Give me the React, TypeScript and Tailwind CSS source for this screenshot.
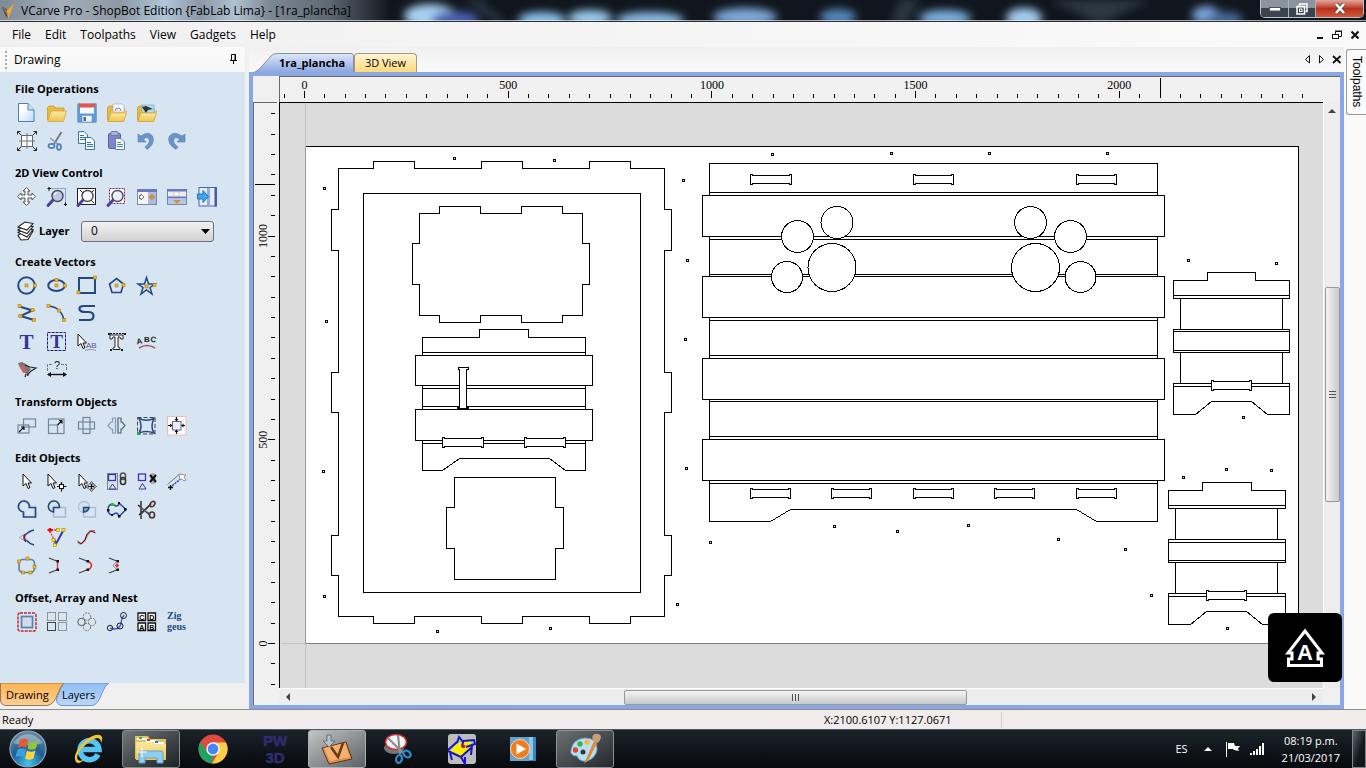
import type { ReactNode } from "react";

const menuItems = ["File", "Edit", "Toolpaths", "View", "Gadgets", "Help"];

const navy = "#24487f";
const gold = "#f2b824";

function Node({ x, y, fill = gold }: { x: number; y: number; fill?: string }) {
  return <rect x={x - 1.5} y={y - 1.5} width="3" height="3" fill={fill} stroke="#b07f10" strokeWidth="0.6" />;
}

function Pointer({ x = 0, y = 0 }: { x?: number; y?: number }) {
  return (
    <path
      transform={`translate(${x} ${y})`}
      d="M0 0V12L3 9.5L5 14.5L7 13.6L5 9H8.5Z"
      fill="#fff"
      stroke="#111"
      strokeWidth="1"
    />
  );
}

function Lens({ fill = "#b9c9e6" }: { fill?: string }) {
  return (
    <>
      <path d="M6.500 12.500L1 18.500" stroke="#4b3fa0" strokeWidth="3" strokeLinecap="round" />
      <circle cx="10.500" cy="9" r="5.500" fill={fill} stroke="#4a4a55" strokeWidth="1.400" />
      <path d="M7.500 8A3.500 3.500 0 0 1 10.500 5.500" stroke="#fff" strokeWidth="1.200" fill="none" />
    </>
  );
}

function Folder() {
  return (
    <>
      <path d="M0.500 17V4.500L2 3H7L9 5H17V8" fill="#e9bb45" stroke="#c79a34" strokeWidth="0.800" />
      <path d="M0.800 18.500L4 8H19.500L16.500 18.500Z" fill="url(#folderFill)" stroke="#d4a53a" strokeWidth="0.800" />
    </>
  );
}

const icons: Record<string, ReactNode> = {
  "New file": (
    <>
      <path d="M1.500 0.500H11L17 7V18.500H1.500Z" fill="url(#paperFill)" stroke="#4682b9" />
      <path d="M11 0.500V7H17" fill="#cfe3f7" stroke="#4682b9" />
    </>
  ),
  "Open file": <Folder />,
  "Save file": (
    <>
      <rect x="0.500" y="0.500" width="19" height="19" rx="1" fill="#5b9bd8" stroke="#7fa6cf" />
      <rect x="3" y="0.500" width="14" height="10" fill="#f6f8fb" />
      <rect x="2" y="0.500" width="16" height="4" fill="#e2574c" />
      <rect x="5" y="12.500" width="10" height="6.500" fill="#eef2f7" stroke="#7e95b1" strokeWidth="0.600" />
      <rect x="6.500" y="14" width="2.500" height="4" fill="#3b6fa5" />
    </>
  ),
  "Import vectors": (
    <>
      <Folder />
      <path d="M6 1H15L17 3V9H6Z" fill="#fff" stroke="#9ab" strokeWidth="0.700" />
      <path d="M8 8A3 3 0 0 1 14 8" fill="#dfe8f2" stroke="#889" />
      <path d="M0.800 18.500L4 10H19.500L16.500 18.500Z" fill="url(#folderFill)" stroke="#d4a53a" strokeWidth="0.800" />
    </>
  ),
  "Import bitmap": (
    <>
      <Folder />
      <rect x="5" y="2" width="12" height="8" fill="#a9dff0" stroke="#8ab" strokeWidth="0.700" />
      <path d="M5 4L9 3L16 6L11 7L9 10Z" fill="#343434" />
      <path d="M0.800 18.500L4 10H19.500L16.500 18.500Z" fill="url(#folderFill)" stroke="#d4a53a" strokeWidth="0.800" />
    </>
  ),
  "Job setup": (
    <g fill="none" stroke="#222">
      <rect x="4.500" y="4.500" width="11" height="11" fill="#f8f8f8" stroke="#666" />
      <path d="M10 2V18M2 10H18" stroke="#777" />
      <path d="M0.500 3.500V0.500H3.500M0.500 0.500L4 4M16.500 0.500H19.500V3.500M19.500 0.500L16 4M0.500 16.500V19.500H3.500M0.500 19.500L4 16M16.500 19.500H19.500V16.500M19.500 19.500L16 16" />
    </g>
  ),
  Cut: (
    <g fill="none">
      <path d="M14.500 1L7 13" stroke="#6d7783" strokeWidth="1.800" />
      <path d="M3 7L12 14" stroke="#8d97a3" strokeWidth="1.500" />
      <ellipse cx="4.500" cy="15" rx="3" ry="2.200" stroke="#4a7fbd" strokeWidth="1.700" />
      <ellipse cx="12" cy="16" rx="2" ry="2.800" stroke="#4a7fbd" strokeWidth="1.700" />
    </g>
  ),
  Copy: (
    <g stroke="#3173b8" strokeWidth="1">
      <path d="M1.500 0.500H7L10.500 4V12.500H1.500Z" fill="#fff" />
      <path d="M3 4.500H7M3 6.500H9M3 8.500H9" />
      <path d="M8.500 6.500H14L17.500 10V18.500H8.500Z" fill="#fff" />
      <path d="M10 11.500H14M10 13.500H16M10 15.500H16" />
    </g>
  ),
  Paste: (
    <>
      <rect x="1.500" y="2.500" width="12" height="15" rx="1" fill="#8184c9" stroke="#5c5fa8" />
      <rect x="4" y="0.500" width="7" height="4" rx="1" fill="#aeb3c7" stroke="#72779a" />
      <path d="M8.500 7.500H14L17.500 11V18.500H8.500Z" fill="#fff" stroke="#4a86c4" />
      <path d="M10 11.500H14M10 13.500H16M10 15.500H16" stroke="#4a86c4" />
    </>
  ),
  Undo: <path d="M1 3V11H9L6.500 8.500Q10 5 12 8Q13.500 12 8 16L10 18.500Q18 13 16 6Q12-1 4 5Z" fill="#6a94c8" stroke="#587fb1" strokeWidth="0.600" />,
  Redo: <path d="M18 3V11H10L12.500 8.500Q9 5 7 8Q5.500 12 11 16L9 18.500Q0 13 2 6Q6-1 15 5Z" fill="#6a94c8" stroke="#587fb1" strokeWidth="0.600" />,
  Pan: (
    <path
      d="M9.500 0.500L13 4H11V8H15V6L18.500 9.500L15 13V11H11V15H13L9.500 18.500L6 15H8V11H4V13L0.500 9.500L4 6V8H8V4H6Z"
      fill="#fafafa"
      stroke="#555"
      strokeWidth="1"
    />
  ),
  "Zoom interactive": (
    <>
      <path d="M3 1.500H18.500V17" fill="none" stroke="#8fa5c4" />
      <path d="M0.500 1.500H4M2 0V4M17 17.500H20M18.500 15.500V19" stroke="#111" />
      <Lens />
    </>
  ),
  "Zoom to drawing": (
    <>
      <rect x="0.500" y="1.500" width="18" height="16" fill="#fff" stroke="#222" />
      <path d="M3 3L6 6M17 3L14 6M17 16L14 13" stroke="#222" />
      <Lens fill="#f4f6f8" />
    </>
  ),
  "Zoom to selected": (
    <>
      <rect x="2.500" y="1.500" width="15" height="15" fill="#fff" stroke="#8b1a8b" strokeDasharray="2 1" />
      <Lens fill="#e9eef5" />
    </>
  ),
  "Tile vertical": (
    <>
      <rect x="0.500" y="2.500" width="19" height="15" fill="#f5f5f5" stroke="#7d86a5" />
      <rect x="0" y="2" width="20" height="3" fill="#6c78bd" />
      <rect x="11" y="5" width="8" height="12" fill="#aebbe8" />
      <path d="M2.500 8.500H4V7L7 10L4 13V11.500H2.500Z" fill="#fff" stroke="#555" strokeWidth="0.800" />
      <path d="M11.500 10L15 6.500L18.500 10L15 13.500Z" fill="#c59a3c" />
    </>
  ),
  "Tile horizontal": (
    <>
      <rect x="0.500" y="2.500" width="19" height="15" fill="#ededf0" stroke="#7d86a5" />
      <rect x="0" y="2" width="20" height="2.500" fill="#6c78bd" />
      <rect x="0" y="9.500" width="20" height="2" fill="#6c78bd" />
      <rect x="7" y="5" width="5" height="4" fill="#fff" stroke="#aaa" strokeWidth="0.600" />
      <rect x="1" y="11.500" width="18" height="5.500" fill="#bac5ea" />
      <path d="M6 13H14L10 17Z" fill="#c59a3c" />
    </>
  ),
  "Switch to toolpaths": (
    <>
      <rect x="2" y="0.500" width="17.500" height="18.500" fill="#e4ecfa" stroke="#4a66b5" />
      <rect x="10" y="1" width="3" height="18" fill="#93a9e0" />
      <path d="M18.500 0V19.500" stroke="#4a56a5" strokeWidth="2" />
      <path d="M0.500 7H6V3.500L11.500 9.500L6 15.500V12H0.500Z" fill="#42a4ee" stroke="#1d74c4" />
    </>
  ),
  "Draw circle": (
    <>
      <circle cx="9.500" cy="9.500" r="8.300" fill="none" stroke={navy} strokeWidth="2" />
      <Node x={9.5} y={9.5} />
      <Node x={18} y={9.5} />
    </>
  ),
  "Draw ellipse": (
    <>
      <ellipse cx="9.500" cy="9.500" rx="8.300" ry="5.500" fill="none" stroke={navy} strokeWidth="2" />
      <Node x={9.5} y={4} />
      <Node x={9.5} y={9.5} />
      <Node x={18} y={9.5} />
    </>
  ),
  "Draw rectangle": (
    <>
      <rect x="2" y="2" width="16" height="15" fill="none" stroke={navy} strokeWidth="2" />
      <Node x={18} y={1.5} />
      <Node x={1.5} y={16.5} />
    </>
  ),
  "Draw polygon": (
    <>
      <path d="M9.500 2.500L16.500 8L14 16.500H5L2.500 8Z" fill="none" stroke={navy} strokeWidth="1.600" />
      <Node x={9.5} y={9.5} />
      <Node x={16.5} y={9} />
    </>
  ),
  "Draw star": (
    <>
      <path d="M9.500 1.500L11.500 8H18L13 11.500L15 18L9.500 14L4 18L6 11.500L1 8H7.500Z" fill="none" stroke={navy} strokeWidth="1.500" />
      <Node x={9.5} y={10.5} />
      <Node x={17.5} y={9} />
    </>
  ),
  "Draw line": (
    <>
      <path d="M2.500 2.500L15.500 6.500L3.500 12L17 16" fill="none" stroke={navy} strokeWidth="2" />
      <Node x={2.5} y={2} />
      <Node x={15.5} y={6} />
      <Node x={3.5} y={12} />
      <Node x={17} y={16} />
    </>
  ),
  "Draw arc": (
    <>
      <path d="M1.500 2Q14 3 17 16" fill="none" stroke={navy} strokeWidth="1.500" />
      <Node x={1.5} y={2} />
      <Node x={12} y={6.5} />
      <Node x={17} y={16} />
    </>
  ),
  "Draw curve": <path d="M18 2H7Q2 2 2.500 5Q3 8 8 8H12Q16.500 8.500 16.500 12Q16.500 16 12 16H2" fill="none" stroke={navy} strokeWidth="2.200" />,
  "Draw text": (
    <text x="9.500" y="16.500" textAnchor="middle" fontSize="21" fontWeight="700" fontFamily="Liberation Serif, serif" fill="#35359a">T</text>
  ),
  "Draw auto text": (
    <>
      <rect x="0.500" y="0.500" width="18" height="18" fill="none" stroke="#1b1b8a" strokeDasharray="3 1" />
      <text x="9.500" y="16" textAnchor="middle" fontSize="19" fontWeight="700" fontFamily="Liberation Serif, serif" fill="#35359a">T</text>
    </>
  ),
  "Text selection": (
    <>
      <Pointer x={1} y={2} />
      <text x="9" y="16" fontSize="8" fontFamily="Liberation Sans, sans-serif" fill="#555a80">AB</text>
      <path d="M8 18.500Q14 16 19 18.500" fill="none" stroke="#8b90b5" />
    </>
  ),
  "Convert text": (
    <>
      <path d="M3 3H16V7H14L13 5H11V15L13 16V17.500H6V16L8 15V5H6L5 7H3Z" fill="#fff" stroke="#222" />
      <path d="M1 1h2v2h-2zM17 1h2v2h-2zM3 17h2v2h-2zM14 17h2v2h-2z" fill="#111" />
      <path d="M3 1.500H17" stroke="#111" strokeDasharray="2 1" />
    </>
  ),
  "Text on curve": (
    <>
      <g fontSize="8" fontWeight="700" fontFamily="Liberation Sans, sans-serif" fill="#222">
        <text x="0" y="12" transform="rotate(-12 3 12)">A</text>
        <text x="7" y="10">B</text>
        <text x="13" y="10" transform="rotate(12 16 10)">C</text>
      </g>
      <path d="M2 16Q10 11 18 16" fill="none" stroke="#a35a60" strokeWidth="1.500" />
    </>
  ),
  "Trace bitmap": (
    <>
      <path d="M1 3L5 2L9 4L14 9L10 14L6 12L3 8Z" fill="#7f7472" />
      <path d="M3 7L6 6L9 12L6 13Z" fill="#d1655a" />
      <path d="M8 5L13 7L19 8L14 11L10 15M9 14L8 17M11 13V16" fill="none" stroke="#222" strokeWidth="1.200" />
    </>
  ),
  Dimension: (
    <>
      <path d="M0.500 11V4.500H6M14 4.500H19.500V11" fill="none" stroke="#777" strokeDasharray="3 1" />
      <text x="10" y="9" textAnchor="middle" fontSize="11" fontFamily="Liberation Sans, sans-serif" fill="#111">?</text>
      <path d="M1 14.500H19" stroke="#111" strokeWidth="1.400" />
      <path d="M0 14.500L4 12V17ZM20 14.500L16 12V17Z" fill="#111" />
    </>
  ),
  Move: (
    <g fill="none" stroke="#71859b" strokeWidth="1.200">
      <rect x="6.500" y="3" width="12" height="8" />
      <rect x="1" y="9" width="11" height="8" />
      <path d="M2 16L7 11M7 11H4M7 11V14" stroke="#111" />
    </g>
  ),
  "Set size": (
    <g fill="none" stroke="#71859b" strokeWidth="1.200">
      <rect x="1.500" y="3" width="15.500" height="14.500" />
      <path d="M1.500 9H10.500V17.500" />
      <path d="M10.500 9L15 4.500M15 4.500H12M15 4.500V7.500" stroke="#111" />
    </g>
  ),
  Rotate: (
    <g fill="none" stroke="#71859b" strokeWidth="1.200">
      <rect x="6" y="1.500" width="7" height="16" />
      <rect x="1.500" y="6" width="16" height="7" />
    </g>
  ),
  Mirror: (
    <g fill="none" stroke="#8a9bb0" strokeWidth="1.200">
      <path d="M8.500 2V17H5.500V13H4L1 9.500L4 6H5.500V2Z" />
      <path d="M11 2V17H14V13H15L18 9.500L15 6H14V2Z" stroke="#52677d" />
    </g>
  ),
  Distort: (
    <>
      <rect x="0.500" y="1.500" width="17.500" height="16.500" fill="none" stroke="#444" strokeDasharray="4 2" />
      <path d="M2 2.500Q9.500 6 17 2.500Q13 10 17 17Q9 14 2 17Q6 10 2 2.500Z" fill="none" stroke={navy} strokeWidth="1.500" />
      <path d="M0 16h3v3h-3z" fill="#26a94a" />
    </>
  ),
  Align: (
    <>
      <rect x="0.500" y="0.500" width="18.500" height="18.500" fill="#fff" stroke="#f3b9b9" />
      <rect x="5.500" y="5.500" width="8.500" height="8.500" fill="#e8eef6" stroke="#668" />
      <path d="M9.500 1V4M9.500 15V18M1 9.500H4M15 9.500H18" stroke="#111" strokeWidth="1.200" />
      <path d="M7.500 3H11.500L9.500 5.500ZM7.500 16H11.500L9.500 13.500ZM3 7.500V11.500L5.500 9.500ZM16.500 7.500V11.500L14 9.500Z" fill="#111" />
    </>
  ),
  Select: <Pointer x={6} y={2} />,
  "Node edit": (
    <>
      <Pointer x={1} y={2} />
      <path d="M10 14.500H19.500M14.500 10V19.500" stroke="#111" strokeWidth="1.200" />
      <rect x="12.500" y="12.500" width="4" height="4" fill="#fff" stroke="#111" />
    </>
  ),
  "Move selection": (
    <>
      <Pointer x={2} y={2} />
      <path d="M9 14.500H19M14.500 10V19" stroke="#111" strokeWidth="1.200" />
      <path d="M12.500 12L14.500 9.500L16.500 12ZM12.500 17L14.500 19.500L16.500 17ZM11 12.500V16.500L9 14.500ZM17 12.500V16.500L19.500 14.500Z" fill="#fff" stroke="#111" strokeWidth="0.700" />
    </>
  ),
  Group: (
    <>
      <rect x="0.500" y="1.500" width="10" height="16" fill="none" stroke="#222" strokeDasharray="1 1" />
      <rect x="1.500" y="2.500" width="7" height="6" fill="none" stroke="#3636b4" strokeWidth="1.300" />
      <path d="M5.500 12L9 17H2Z" fill="none" stroke="#3636b4" />
      <rect x="13.500" y="1" width="5" height="6.500" rx="2.500" fill="none" stroke="#555" strokeWidth="1.600" />
      <rect x="13.500" y="5.500" width="5" height="7" rx="2.500" fill="none" stroke="#333" strokeWidth="1.600" />
    </>
  ),
  Ungroup: (
    <>
      <rect x="1.500" y="2" width="7" height="6.500" fill="none" stroke="#3636b4" strokeWidth="1.300" />
      <path d="M5.500 11.500L9 17H2Z" fill="none" stroke="#3636b4" />
      <rect x="13" y="1" width="6" height="11" rx="3" fill="#aaa" />
      <path d="M13 3L19 10M19 3L13 10" stroke="#111" strokeWidth="2" />
    </>
  ),
  Measure: (
    <>
      <path d="M0.500 12.500L12 2.500" stroke="#777" />
      <path d="M3 15.500L16 5" stroke="#2b2bd0" strokeWidth="1.400" strokeDasharray="2 1" />
      <path d="M1 15.500H6M3.500 13V18" stroke="#111" strokeWidth="1.300" />
      <path d="M12 2L19 3L17 5L19 8L17 9L15 7L13 8Z" fill="#fff" stroke="#777" strokeWidth="0.800" />
    </>
  ),
  Weld: <path d="M6.500 12A5.500 5.500 0 1 1 12.300 7.500H18.500V17H6.500Z" fill="none" stroke={navy} strokeWidth="1.700" />,
  Subtract: (
    <>
      <rect x="6.500" y="7.500" width="12" height="9.500" fill="none" stroke="#a9bbd4" strokeWidth="1.600" />
      <path d="M6.500 12A5.500 5.500 0 1 1 12.300 7.500H6.500Z" fill="none" stroke={navy} strokeWidth="1.600" />
    </>
  ),
  Intersect: (
    <>
      <circle cx="7" cy="7" r="5.500" fill="none" stroke="#b0c2da" strokeWidth="1.300" />
      <rect x="6.500" y="7.500" width="12" height="9.500" fill="none" stroke="#a9bbd4" strokeWidth="1.300" />
      <path d="M6.500 12V7.500H12Q11.500 11.500 6.500 12Z" fill="#8ca8ca" stroke={navy} strokeWidth="1.400" />
    </>
  ),
  "Join vectors": (
    <>
      <path d="M1 10Q1 5 5 4L9 6Q12 6 12 3L19 9.500L12 16.500Q11 13 9 13L5 15Q1 14 1 10Z" fill="none" stroke="#3050a0" strokeWidth="1.500" />
      <path d="M4 3h3v3h-3z" fill="#1ec42d" />
      <path d="M0 9h2.500v2.500h-2.500zM11 2h2v2h-2zM17 8h2.500v2.500h-2.500zM11 15h2.500v2.500h-2.500zM4 14h2v2h-2z" fill="#111" />
    </>
  ),
  Trim: (
    <>
      <path d="M4 1V19M1 5L13 15M2 15L14 4" stroke="#222" strokeWidth="1.400" fill="none" />
      <path d="M1 6L12 13M3 16L13 6" stroke="#777" />
      <ellipse cx="15.500" cy="4" rx="2" ry="3" transform="rotate(35 15.500 4)" fill="none" stroke="#54373c" strokeWidth="1.700" />
      <ellipse cx="15" cy="15" rx="2.500" ry="3" fill="none" stroke="#54373c" strokeWidth="1.700" />
    </>
  ),
  "Extend vectors": (
    <>
      <path d="M2 9.500L8 6Q5 10 8 13Z" fill="none" stroke="#9aacbf" />
      <path d="M17 2Q12 3 7 8" fill="none" stroke={navy} strokeWidth="1.700" />
      <path d="M8 6.500Q6 10 9 13.500" fill="none" stroke="#931c3f" strokeWidth="2" />
      <path d="M9 12Q13 16 17 17" fill="none" stroke={navy} strokeWidth="1.700" />
    </>
  ),
  Fillet: (
    <>
      <path d="M4 2H13" stroke="#e83838" strokeWidth="1.300" strokeDasharray="2 1" />
      <path d="M3 3L7 12" stroke="#e83838" strokeWidth="1.300" strokeDasharray="2 1" />
      <path d="M7 11L9 16L16 3" fill="none" stroke="#3335a8" strokeWidth="2" />
      <path d="M0.500 2H6M3 0V4.500" stroke="#f00" strokeWidth="2" />
      <Node x={11} y={2} fill="#fff000" />
      <Node x={16.5} y={2} fill="#fff000" />
      <Node x={6.5} y={12} fill="#fff000" />
      <Node x={8} y={17} fill="#fff000" />
    </>
  ),
  "Fit curves": (
    <>
      <path d="M1 14Q4 18 8 12Q12 2 15 3H18" fill="none" stroke="#c96f6f" strokeWidth="2" />
      <path d="M0.500 13L4 16L8 12L10 6L14 3L18.500 5" fill="none" stroke="#522" />
    </>
  ),
  "Round rectangle": (
    <>
      <rect x="2" y="3.500" width="15.500" height="13" rx="4" fill="none" stroke="#5d81ae" strokeWidth="1.700" />
      <Node x={10.5} y={2.5} />
      <Node x={2} y={5.5} />
      <Node x={17.5} y={11} />
      <Node x={6} y={16.5} />
      <Node x={13.5} y={16.5} />
    </>
  ),
  "Straight join": (
    <>
      <path d="M2 2L11 5.500M2 17L11 13.500" stroke="#444" strokeWidth="1.300" />
      <path d="M10.500 5V14" stroke="#d33" strokeWidth="1.300" />
      <path d="M9.500 4h2.500v2.500h-2.500zM9.500 12.500h2.500v2.500h-2.500z" fill="#111" />
    </>
  ),
  "Curve join": (
    <>
      <path d="M2 2L11 5.500M2 17L11 13.500" stroke="#444" strokeWidth="1.300" />
      <path d="M11 5Q18 9.500 11 14" stroke="#d33" strokeWidth="1.500" fill="none" />
      <path d="M9.500 4h2.500v2.500h-2.500zM9.500 12.500h2.500v2.500h-2.500z" fill="#111" />
    </>
  ),
  "Move join": (
    <>
      <path d="M2 2L11 5.500M2 17L11 13.500" stroke="#444" strokeWidth="1.300" />
      <path d="M10 5L6 9.500L10 14" stroke="#888" fill="none" />
      <path d="M9.500 4h2.500v2.500h-2.500zM9.500 12.500h2.500v2.500h-2.500z" fill="#111" />
      <path d="M8 9.500H12M10 7.500V11.500" stroke="#e22" strokeWidth="1.500" />
    </>
  ),
  "Offset vectors": (
    <>
      <rect x="1" y="1" width="18" height="18" rx="2" fill="none" stroke="#c4262d" strokeWidth="1.500" strokeDasharray="3 1" />
      <rect x="4.500" y="4.500" width="11" height="11" fill="#cfdcec" stroke="#5a80b2" strokeWidth="1.700" />
    </>
  ),
  "Array copy": (
    <g fill="none" stroke="#444">
      <path d="M0.500 0.500H8.500V8.500H0.500ZM11.500 0.500H19.500V8.500H11.500ZM11.500 10.500H19.500V18.500H11.500Z" strokeDasharray="1 1" />
      <rect x="0.500" y="10.500" width="8" height="8" />
    </g>
  ),
  "Circular copy": (
    <g fill="none" stroke="#777">
      <circle cx="10" cy="4.500" r="3.700" strokeDasharray="2 1" />
      <circle cx="15" cy="10" r="3.700" strokeDasharray="2 1" />
      <circle cx="10" cy="15" r="3.700" strokeDasharray="2 1" />
      <circle cx="4.500" cy="10" r="3.700" stroke="#555" />
    </g>
  ),
  "Copy along": (
    <>
      <path d="M3 16Q12 19 14 12Q14 7 17 3" fill="none" stroke="#4b55e0" strokeWidth="1.500" />
      <g fill="none" stroke="#222">
        <circle cx="3" cy="16" r="2.700" />
        <circle cx="13" cy="14" r="3" />
        <circle cx="16.500" cy="3.500" r="3" />
      </g>
    </>
  ),
  Nest: (
    <g fontSize="7" fontWeight="700" fontFamily="Liberation Sans, sans-serif">
      <g fill="#fff" stroke="#111" strokeWidth="1.300">
        <path d="M1 1H8.500V8.500H1ZM11 1H18.500V8.500H11ZM1 11H8.500V18.500H1ZM11 11H18.500V18.500H11Z" />
      </g>
      <text x="2.300" y="7.500">C</text>
      <text x="12.300" y="7.500">D</text>
      <text x="2.300" y="17.500">A</text>
      <text x="12.300" y="17.500">B</text>
    </g>
  ),
  "Nest text": (
    <g fontSize="10" fontWeight="700" fontFamily="Liberation Serif, serif" fill="#24487f">
      <text x="0" y="7">Zig</text>
      <text x="0" y="18">geus</text>
    </g>
  ),
};

type Section = { title: string; rows: string[][]; layer?: boolean };

const sections: Section[] = [
  {
    title: "File Operations",
    rows: [
      ["New file", "Open file", "Save file", "Import vectors", "Import bitmap"],
      ["Job setup", "Cut", "Copy", "Paste", "Undo", "Redo"],
    ],
  },
  {
    title: "2D View Control",
    rows: [["Pan", "Zoom interactive", "Zoom to drawing", "Zoom to selected", "Tile vertical", "Tile horizontal", "Switch to toolpaths"]],
    layer: true,
  },
  {
    title: "Create Vectors",
    rows: [
      ["Draw circle", "Draw ellipse", "Draw rectangle", "Draw polygon", "Draw star"],
      ["Draw line", "Draw arc", "Draw curve"],
      ["Draw text", "Draw auto text", "Text selection", "Convert text", "Text on curve"],
      ["Trace bitmap", "Dimension"],
    ],
  },
  { title: "Transform Objects", rows: [["Move", "Set size", "Rotate", "Mirror", "Distort", "Align"]] },
  {
    title: "Edit Objects",
    rows: [
      ["Select", "Node edit", "Move selection", "Group", "Ungroup", "Measure"],
      ["Weld", "Subtract", "Intersect", "Join vectors", "Trim"],
      ["Extend vectors", "Fillet", "Fit curves"],
      ["Round rectangle", "Straight join", "Curve join", "Move join"],
    ],
  },
  {
    title: "Offset, Array and Nest",
    rows: [["Offset vectors", "Array copy", "Circular copy", "Copy along", "Nest", "Nest text"]],
  },
];

// Desktop icons showing through the glass title bar
const glows = [
  { x: 430, y: 16, rx: 26, ry: 12, fill: "#a8d2f2" },
  { x: 455, y: 20, rx: 24, ry: 9, fill: "#4a5fae" },
  { x: 542, y: 20, rx: 24, ry: 8, fill: "#8cc4ec" },
  { x: 590, y: 18, rx: 22, ry: 8, fill: "#9cccf0" },
  { x: 650, y: 20, rx: 34, ry: 8, fill: "#8abbe4" },
  { x: 745, y: 17, rx: 32, ry: 9, fill: "#7fa9da" },
  { x: 838, y: 17, rx: 18, ry: 8, fill: "#5587bd" },
  { x: 945, y: 18, rx: 26, ry: 8, fill: "#7db0e0" },
  { x: 1024, y: 18, rx: 18, ry: 10, fill: "#a3cdf0" },
  { x: 1206, y: 15, rx: 14, ry: 9, fill: "#7aa5dc" },
  { x: 1225, y: 19, rx: 18, ry: 7, fill: "#4a6a9a" },
];

function TitleBar() {
  return (
    <header className="relative flex h-[22px] shrink-0 items-start justify-between overflow-hidden border-b border-[#2b3036] bg-[#10161d]">
      <svg className="absolute inset-0 h-full w-full" aria-hidden="true">
        <g filter="url(#glassBlur)">
          {glows.map((g) => (
            <ellipse key={g.x} cx={g.x} cy={g.y} rx={g.rx} ry={g.ry} fill={g.fill} />
          ))}
          <path d="M480 0L510 26H500L465 0ZM900 0H920L905 24H890ZM1050 0H1150L1100 24Z" fill="#2c3742" />
        </g>
      </svg>
      <div className="absolute inset-y-0 left-0 w-[400px] bg-[linear-gradient(90deg,#7e8b96_0,#a3afba_60px,#8d9aa6_120px,#b0c6d9_165px,#8b98a5_200px,#b0c2d0_235px,#7b8893_270px,#5d6872_330px,#141a2000_390px)]" />
      <div className="absolute inset-x-0 bottom-0 h-[1px] bg-white/60" />
      <div className="relative flex h-[21px] items-center">
        <svg className="ml-[2px] h-4 w-4" viewBox="0 0 16 16" aria-hidden="true">
          <path d="M0 4L5 6L6 16L3 12Z" fill="#4c4c4c" />
          <path d="M12 1L6 16L4 8Z" fill="#f0a52c" />
          <path d="M0 4L4 5L6 14Z" fill="#707070" />
        </svg>
        <h1 className="ml-[3px] whitespace-nowrap text-black">VCarve Pro - ShopBot Edition {"{FabLab Lima}"} - [1ra_plancha]</h1>
      </div>
      <div className="relative mr-[2px] flex h-[18px] overflow-hidden rounded-b-[5px] border border-t-0 border-[#b9c3cc]">
        <button aria-label="Minimize" className="flex w-7 items-center justify-center border-r border-[#aab4bd] bg-linear-to-b from-[#8b949c] from-45% to-[#3b444c] to-50%">
          <svg width="12" height="6" aria-hidden="true"><rect x="0.500" y="1.500" width="11" height="3.500" fill="#fff" stroke="#4a535b" /></svg>
        </button>
        <button aria-label="Restore" className="flex w-[27px] items-center justify-center border-r border-[#aab4bd] bg-linear-to-b from-[#8b949c] from-45% to-[#3b444c] to-50%">
          <svg width="12" height="12" fill="none" stroke="#fff" strokeWidth="1.500" aria-hidden="true">
            <path d="M3.500 2.500V1H11V8.500H9.500" />
            <rect x="1" y="3.500" width="7.500" height="7.500" />
            <rect x="3.500" y="6" width="2.500" height="2.500" strokeWidth="1" />
          </svg>
        </button>
        <button aria-label="Close" className="flex w-[47px] items-center justify-center bg-linear-to-b from-[#dfa79c] from-0% via-[#b8321c] via-50% to-[#d4583a]">
          <svg width="12" height="11" viewBox="0 0 12 11" aria-hidden="true">
            <path d="M2 1L10 10M10 1L2 10" stroke="#59453f" strokeWidth="4" />
            <path d="M2 1L10 10M10 1L2 10" stroke="#fff" strokeWidth="2.600" />
          </svg>
        </button>
      </div>
    </header>
  );
}

function MenuBar() {
  return (
    <div className="flex h-[25px] shrink-0 items-center justify-between bg-linear-to-r from-[#f0f0f0] to-[#fafafa] pr-[6px] pl-2">
      <nav className="flex gap-[6px]">
        {menuItems.map((item) => (
          <button key={item} className="px-1">
            {item}
          </button>
        ))}
      </nav>
      <div className="flex items-center gap-2">
        <button aria-label="Minimize document">
          <svg width="8" height="10" aria-hidden="true"><path d="M1 8H7" stroke="#111" strokeWidth="2" /></svg>
        </button>
        <button aria-label="Restore document">
          <svg width="10" height="10" fill="none" stroke="#111" aria-hidden="true">
            <path d="M3.500 4V1.500H9.500V6.500H7M3 1H10M0 4.500H7" />
            <rect x="0.500" y="4.500" width="6" height="4" />
          </svg>
        </button>
        <button aria-label="Close document">
          <svg width="10" height="10" aria-hidden="true"><path d="M1.500 1.500L8.500 8.500M8.500 1.500L1.500 8.500" stroke="#111" strokeWidth="2.200" /></svg>
        </button>
      </div>
    </div>
  );
}

function LayerRow() {
  return (
    <div className="mt-[7px] flex h-[26px] items-center pl-[5px]">
      <svg className="h-5 w-5" viewBox="0 0 20 20" aria-hidden="true">
        <g fill="#fff" stroke="#222" strokeWidth="1.100">
          <path d="M1 14.500L6 10H16L11 18.500L4 19Z" />
          <path d="M1 11.500L7 7.500L16 8.500L10 16Z" />
          <path d="M1 9L7 4.500L16 5.500L10 12.500Z" />
          <path d="M1 6L8 1L16 2.500L10 9Z" />
        </g>
      </svg>
      <label htmlFor="layer" className="ml-[2px] w-[42px] text-[11px] font-bold">
        Layer
      </label>
      <div className="relative">
        <select id="layer" className="h-[21px] w-[133px] appearance-none rounded-[3px] border border-[#707070] bg-linear-to-b from-[#f2f2f2] to-[#d2d2d2] pl-[9px]">
          <option>0</option>
        </select>
        <svg className="pointer-events-none absolute top-2 right-1" width="9" height="5" aria-hidden="true">
          <path d="M0 0H9L4.500 5Z" fill="#000" />
        </svg>
      </div>
    </div>
  );
}

function DrawingPanel() {
  return (
    <aside className="flex w-[245px] shrink-0 flex-col">
      <div className="flex h-[25px] shrink-0 items-center bg-linear-to-b from-[#fafafa] to-[#f7f7f7] pr-[7px]">
        <svg className="ml-[5px] h-[19px] w-[3px]" aria-hidden="true">
          <path d="M1 1V19" stroke="#aaa" strokeWidth="2" strokeDasharray="2 2" />
        </svg>
        <h2 className="ml-[6px] flex-1">Drawing</h2>
        <button aria-label="Auto hide">
          <svg width="9" height="11" aria-hidden="true">
            <path d="M2.500 6V0.500H6.500V6M6 1V6M1 6.500H8M4.500 7V10" fill="none" stroke="#000" />
          </svg>
        </button>
      </div>
      <div className="flex min-h-0 flex-1 flex-col gap-2 overflow-hidden bg-[#d7e4f2] pt-[7px] pl-3">
        {sections.map((s) => (
          <section key={s.title}>
            <h3 className="h-5 pl-[3px] text-[11px] leading-5 font-bold">{s.title}</h3>
            {s.rows.map((row) => (
              <div key={row[0]} className="flex">
                {row.map((name) => (
                  <button key={name} aria-label={name} className="flex h-7 w-[30px] items-center justify-center">
                    <svg className="h-5 w-5 overflow-visible" viewBox="0 0 20 20" aria-hidden="true">
                      {icons[name]}
                    </svg>
                  </button>
                ))}
              </div>
            ))}
            {s.layer && <LayerRow />}
          </section>
        ))}
      </div>
      <div className="flex h-[26px] shrink-0 items-start">
        <button className="relative z-10 h-[23px] w-[62px] pl-[6px] text-left">
          <svg className="absolute inset-0" width="65" height="23" aria-hidden="true">
            <path d="M0.500 0H64Q60 4 58 10Q54 22 47 22.500H6Q0.500 22 0.500 17Z" fill="url(#orangeTab)" stroke="#8d7b5c" />
          </svg>
          <span className="relative text-[11px]">Drawing</span>
        </button>
        <button className="relative h-[23px] w-12 text-left">
          <svg className="absolute top-0 -left-[6px]" width="54" height="23" aria-hidden="true">
            <path d="M7 0H53Q49 2 46 10Q42 22 36 22.500H6Q0.500 22 0.500 16Z" fill="url(#blueTab)" stroke="#6f95c9" />
          </svg>
          <span className="relative text-[11px]">Layers</span>
        </button>
      </div>
    </aside>
  );
}

const tickStep = 20.37;

function TopRuler() {
  return (
    <svg className="h-full w-full border-t border-l border-[#696969]" shapeRendering="crispEdges" aria-hidden="true">
      {Array.from({ length: 51 }, (_, i) => i - 1).map((i) => {
        const x = 24.5 + i * tickStep;
        const major = i % 10 === 0;
        return (
          <g key={i}>
            <path d={`M${x} ${major ? 14 : 17}V21`} stroke="#000" />
            {major && (
              <text x={x} y="12" textAnchor="middle" fontSize="12" fontFamily="Liberation Serif, serif">
                {i * 50}
              </text>
            )}
          </g>
        );
      })}
      <path d="M880.500 1V21" stroke="#000" />
    </svg>
  );
}

function SideRuler() {
  return (
    <svg className="h-full w-full border-t border-l border-[#696969]" shapeRendering="crispEdges" aria-hidden="true">
      {Array.from({ length: 29 }, (_, i) => i - 2).map((i) => {
        const y = 540.5 - i * tickStep;
        const major = i % 10 === 0;
        return (
          <g key={i}>
            <path d={`M${major ? 14 : 17} ${y}H21`} stroke="#000" />
            {major && (
              <text transform={`translate(13 ${y}) rotate(-90)`} textAnchor="middle" fontSize="12" fontFamily="Liberation Serif, serif">
                {i * 50}
              </text>
            )}
          </g>
        );
      })}
      <path d="M1 81.500H21" stroke="#000" />
    </svg>
  );
}

// Horizontal dog-bone slot, x/y is the top left corner of the end caps
function Slot({ x, y, w = 41 }: { x: number; y: number; w?: number }) {
  const r = x + w;
  return (
    <path d={`M${x} ${y}H${x + 2}V${y + 1}H${r - 2}V${y}H${r}V${y + 10}H${r - 2}V${y + 9}H${x + 2}V${y + 10}H${x}Z`} />
  );
}

const bigSlots = [750, 831, 913, 994, 1076];

const circles = [
  [797, 236, 16],
  [836.5, 222, 16],
  [831.5, 267, 24],
  [786.5, 276.5, 15.5],
  [1030, 222, 16],
  [1035, 267, 24],
  [1070, 236, 16],
  [1080, 276.5, 15.5],
];

const pins = [
  [454, 158], [554, 160], [324, 188], [326, 321], [323, 471], [324, 596], [437, 631], [550, 628],
  [683, 180], [687, 260], [685, 339], [686, 468], [677, 604], [772, 154], [891, 153], [989, 153],
  [1107, 153], [1188, 260], [1276, 263], [1243, 417], [1183, 477], [1226, 469], [1271, 470], [710, 542],
  [834, 526], [897, 531], [968, 525], [1058, 539], [1125, 549], [1151, 595], [1227, 628],
];

function Canvas() {
  return (
    <svg className="h-full w-full border-t border-l border-black bg-[#dcdcdc]" role="img" aria-label="Cutting sheet" shapeRendering="crispEdges">
      <g transform="translate(-279.500 -102.500)" fill="none" stroke="#000">
        <path d="M305 102V700M280 643H306" stroke="#c4c4c4" />
        <rect x="305.500" y="146.500" width="993" height="497" fill="#fff" stroke="none" />
        <path d="M305 146V643" stroke="#999" />
        <path d="M305 146H1298V643" />
        <path d="M305 643H1298" stroke="#808080" />

        <path d="M338 168H373V161H414V168H481V161H522V168H589V161H630V168H664V209H671V250H664V372H671V412H664V535H671V575H664V616H630V623H589V616H522V623H481V616H414V623H373V616H338V575H331V535H338V412H331V372H338V250H331V209H338Z" />
        <path d="M363 193H640V592H363Z" />
        <path d="M419 213H439V206H480V213H521V206H562V213H582V243H589V284H582V315H562V322H521V315H480V322H439V315H419V284H412V243H419Z" />
        <path d="M422 355V337H479V329H528V337H585V355M422 352H585M415 355H592V385H415ZM422 385V409M585 385V409M422 388H585M422 406H585M415 409H592V440H415ZM422 440V470H442L459 458H549L565 470H585V440M422 443H585" />
        <path d="M454 477H555V507H563V548H555V579H454V548H446V507H454Z" />
        <g fill="#fff">
          <Slot x={442} y={437} />
          <Slot x={524} y={437} />
          <path d="M458 367H468V369H466V407H468V408H457V407H459V369H458Z" />
        </g>

        <path d="M709 195V163H1157V195M709 192H1157M702 195H1164V236H702ZM709 236V276M1157 236V276M709 239H1157M709 274H1157M702 276H1164V317H702ZM709 317V358M1157 317V358M709 320H1157M709 355H1157M702 358H1164V399H702ZM709 399V439M1157 399V439M709 401H1157M709 436H1157M702 439H1164V480H702ZM709 480V521H770L790 509H1076L1096 521H1157V480M709 483H1157" />
        <Slot x={750} y={174} />
        <Slot x={913} y={174} w={40} />
        <Slot x={1076} y={174} w={40} />
        {bigSlots.map((x) => (
          <Slot key={x} x={x} y={488} w={40} />
        ))}
        {circles.map(([cx, cy, r]) => (
          <circle key={cx} cx={cx} cy={cy} r={r} fill="#fff" />
        ))}

        <path d="M1173 298V280H1207V272H1255V280H1289V298ZM1173 295H1289M1180 298V329M1282 298V329M1173 329H1289V352H1173ZM1173 331H1289M1173 350H1289M1180 352V383M1282 352V383M1173 383H1289V414H1267L1251 401H1211L1195 414H1173ZM1173 386H1289" />
        <path d="M1168 508V490H1202V482H1251V490H1285V508ZM1168 505H1285M1175 508V539M1277 508V539M1168 539H1285V562H1168ZM1168 542H1285M1168 560H1285M1175 562V593M1277 562V593M1168 593H1285V624H1262L1246 611H1206L1190 624H1168ZM1168 596H1285" />
        <g fill="#fff">
          <Slot x={1211} y={380} w={40} />
          <Slot x={1206} y={590} w={40} />
        </g>
        {pins.map(([x, y]) => (
          <rect key={`${x}-${y}`} x={x - 1} y={y - 1} width="2" height="2" />
        ))}
      </g>
    </svg>
  );
}

function Workspace() {
  return (
    <main className="ml-1 flex min-w-0 flex-1 flex-col">
      <div className="flex h-[25px] shrink-0 items-end justify-between bg-linear-to-b from-[#f0f0f0] to-[#fafafa] pr-[2px]">
        <div className="flex items-end">
          <button className="relative h-[19px] w-[105px] pl-[30px] text-left text-[11px] font-bold">
            <svg className="absolute inset-0" width="105" height="19" aria-hidden="true">
              <path d="M5 19.500Q9 18 14 12L22 3Q24 0.500 28 0.500H102Q104.500 0.500 104.500 3V19.500" fill="url(#activeTab)" stroke="#8b8f98" />
            </svg>
            <span className="relative">1ra_plancha</span>
          </button>
          <button className="h-[19px] w-[63px] rounded-t-[4px] border border-b-0 border-[#a09a8a] bg-linear-to-b from-[#fff4d4] to-[#ffd877] text-[11px]">3D View</button>
        </div>
        <div className="flex h-full items-center gap-[6px]">
          <button aria-label="Previous tab">
            <svg width="8" height="9" aria-hidden="true"><path d="M5.500 0.500V8L1.500 4.500Z" fill="none" stroke="#111" /></svg>
          </button>
          <button aria-label="Next tab">
            <svg width="8" height="9" aria-hidden="true"><path d="M1.500 0.500V8L5.500 4.500Z" fill="none" stroke="#111" /></svg>
          </button>
          <button aria-label="Close tab">
            <svg width="10" height="9" aria-hidden="true"><path d="M1 1L8.500 8M8.500 1L1 8" stroke="#111" strokeWidth="1.800" /></svg>
          </button>
        </div>
      </div>
      <div className="grid min-h-0 flex-1 grid-cols-[26px_minmax(0,1fr)_17px] grid-rows-[26px_minmax(0,1fr)_17px] border-4 border-[#8ba7e1] bg-[#f0f0f0]">
        <div />
        <div className="col-span-2 min-w-0">
          <TopRuler />
        </div>
        <div className="row-span-2 min-h-0 pr-[2px]">
          <SideRuler />
        </div>
        <Canvas />
        <div className="flex flex-col items-center border-l border-white bg-[#ededed]">
          <span className="flex h-[17px] items-center">
            <svg width="8" height="4" aria-hidden="true"><path d="M0 4H8L4 0Z" fill="#444" /></svg>
          </span>
          <span className="grow-[169] basis-0" />
          <span className="flex w-[15px] grow-[213] basis-0 items-center justify-center rounded-[2px] border border-[#999] bg-linear-to-r from-[#f4f4f4] to-[#c9c9cf]">
            <svg width="7" height="9" aria-hidden="true"><path d="M0 1.500H7M0 4.500H7M0 7.500H7" stroke="#555" /></svg>
          </span>
          <span className="grow-[170] basis-0" />
          <span className="h-[17px]" />
        </div>
        <div className="flex items-center border-t border-white bg-[#ededed]">
          <span className="flex w-[17px] items-center justify-center">
            <svg width="4" height="8" aria-hidden="true"><path d="M4 0V8L0 4Z" fill="#444" /></svg>
          </span>
          <span className="grow-[328] basis-0" />
          <span className="flex h-[15px] grow-[342] basis-0 items-center justify-center rounded-[2px] border border-[#999] bg-linear-to-b from-[#f4f4f4] to-[#c9c9c9]">
            <svg width="9" height="7" aria-hidden="true"><path d="M1.500 0V7M4.500 0V7M7.500 0V7" stroke="#555" /></svg>
          </span>
          <span className="grow-[339] basis-0" />
          <span className="flex w-[17px] items-center justify-center">
            <svg width="4" height="8" aria-hidden="true"><path d="M0 0V8L4 4Z" fill="#444" /></svg>
          </span>
        </div>
        <div />
      </div>
    </main>
  );
}

function StatusBar() {
  return (
    <footer className="flex h-5 shrink-0 items-center border-t border-[#8d8d8d] bg-[#f0eceb] pl-[2px] text-[11px]">
      <p className="flex-1">Ready</p>
      <p className="w-[178px] border-r border-[#d5d0ce]">X:2100.6107 Y:1127.0671</p>
      <p className="w-[364px]" />
    </footer>
  );
}

function Taskbar() {
  return (
    <footer className="flex h-[39px] shrink-0 items-stretch overflow-hidden border-t border-[#4f5962] bg-linear-to-b from-[#1b232a] to-[#070a0e] text-white">
      <button aria-label="Start" className="flex w-[55px] items-center justify-center">
        <svg width="38" height="38" viewBox="0 0 38 38" aria-hidden="true">
          <circle cx="19" cy="19" r="18" fill="url(#orb)" stroke="#8fa9ba" strokeWidth="1.200" />
          <path d="M4 13Q19 -5 34 13Q19 18 4 13Z" fill="#fff" opacity="0.350" />
          <path d="M11 10Q15 7 19 10L17 18Q13 15 9 18Z" fill="#e8592b" />
          <path d="M20.500 11Q24 13 29 10.500L27 18.500Q23 21 18.500 18.500Z" fill="#8cc63f" />
          <path d="M8.500 19.500Q13 17 17 19.500L15 27.500Q11 25 6.500 27Z" fill="#3b9fe0" />
          <path d="M18 20.500Q22 23 26.500 20.500L24.500 28.500Q20 31 16 28.500Z" fill="#fbd33c" />
        </svg>
      </button>
      <button aria-label="Internet Explorer" className="flex w-[67px] items-center justify-center">
        <svg width="32" height="32" viewBox="0 0 32 32" aria-hidden="true">
          <path d="M25 21.500A9.500 9.500 0 1 1 26 16.500H9" fill="none" stroke="#55c4f5" strokeWidth="5.500" />
          <path d="M3 29Q-1 22 9 11Q20 0 27 2Q31 4 28 10Q28 5 24 5Q17 6 9 15Q2 23 5 27Q8 29 12 26Q6 32 3 29Z" fill="#f5c52c" />
        </svg>
      </button>
      <button aria-label="Windows Explorer" className="flex w-[58px] items-center justify-center rounded-[3px] border border-[#83898e] bg-linear-to-br from-[#73777a] to-[#1d2226]">
        <svg width="34" height="32" viewBox="0 0 34 32" aria-hidden="true">
          <path d="M1 3H14L16 6H32V26H1Z" fill="#e3c465" />
          <path d="M3 5H13V7H3ZM12 7H22V9H12ZM20 9H30V11H20Z" fill="#fff" />
          <path d="M5 4h3v2h-3z" fill="#2da84a" />
          <path d="M13 6h3v2h-3z" fill="#d83a2b" />
          <path d="M21 8h3v2h-3z" fill="#2d74d8" />
          <path d="M2 9H18L20 11H32V27H2Z" fill="url(#folderFill)" />
          <path d="M5 30V20Q5 18 7 18H27Q29 18 29 20V30H23V25H11V30Z" fill="#8fcdf0" stroke="#5fa4d2" />
          <path d="M8 14V24M3 19H13" stroke="#fff" strokeWidth="1" />
        </svg>
      </button>
      <button aria-label="Google Chrome" className="flex w-[66px] items-center justify-center">
        <svg width="30" height="30" viewBox="0 0 30 30" aria-hidden="true">
          <circle cx="15" cy="15" r="14.500" fill="#dd4b3e" />
          <path d="M2.500 7.700L9 18.500L15 21.500L14 29.500A14.500 14.500 0 0 1 2.500 7.700Z" fill="#1da462" />
          <path d="M15 8.500H28A14.500 14.500 0 0 1 14 29.500L20.500 18.500Z" fill="#ffcd46" />
          <circle cx="15" cy="15" r="6.700" fill="#fff" />
          <circle cx="15" cy="15" r="5.400" fill="#4587f3" />
        </svg>
      </button>
      <button aria-label="PW3D" className="flex w-[62px] items-center justify-center pr-1">
        <svg width="34" height="36" viewBox="0 0 34 36" fontFamily="Liberation Sans, sans-serif" fontSize="15" fontWeight="700" fill="#2f2d70" stroke="#2f2d70" strokeWidth="0.500" aria-hidden="true">
          <text x="17" y="15" textAnchor="middle">PW</text>
          <text x="17" y="32" textAnchor="middle">3D</text>
        </svg>
      </button>
      <button aria-label="VCarve Pro" className="flex w-[58px] items-center justify-center rounded-[3px] border border-[#aab0b5] bg-linear-to-br from-[#c3c5c7] to-[#5d6266]">
        <svg width="32" height="32" viewBox="0 0 32 32" aria-hidden="true">
          <path d="M1 15L25 9L31 26L8 31Z" fill="#e08f4c" stroke="#5b3313" />
          <path d="M3 15L24 10L29 24L9 28Z" fill="#f3b071" />
          <path d="M10 14L17 24L22 10" fill="none" stroke="#6b3a12" strokeWidth="2.500" />
          <path d="M6 2H10V8H14L8 14L2 8H6Z" fill="#b7c2c9" stroke="#66727b" />
        </svg>
      </button>
      <button aria-label="Snipping Tool" className="flex w-16 items-center justify-center">
        <svg width="32" height="32" viewBox="0 0 32 32" fill="none" aria-hidden="true">
          <ellipse cx="12" cy="15" rx="10" ry="6" fill="#777" />
          <ellipse cx="14" cy="9" rx="10.500" ry="7.500" fill="#f5f5f5" stroke="#c92a2a" strokeWidth="1.500" />
          <path d="M6 5L21 20M16 2L18 21" stroke="#8a8f96" strokeWidth="2.200" />
          <ellipse cx="25" cy="21" rx="4" ry="3" transform="rotate(35 25 21)" stroke="#2a8fd0" strokeWidth="2.200" />
          <ellipse cx="17" cy="26" rx="2.800" ry="4" transform="rotate(15 17 26)" stroke="#2a8fd0" strokeWidth="2.200" />
        </svg>
      </button>
      <button aria-label="ShopBot" className="flex w-16 items-center justify-center">
        <svg width="30" height="32" viewBox="0 0 30 32" aria-hidden="true">
          <rect x="1" y="1" width="28" height="30" rx="3" fill="#bdbdbd" />
          <path d="M3 18L11 10L23 8L26 14L15 25Z" fill="#ffee00" />
          <path d="M1 18L14 24L25 14M1 17L10 9M3 20L5 27M14 24L18 31V24M25 13L24 22M10 10L12 4L16 9L15 14M16 8L27 7L28 11L19 14" fill="none" stroke="#1414c8" strokeWidth="2" />
          <path d="M15 12h3v3h-3z" fill="#e01010" />
        </svg>
      </button>
      <button aria-label="Media Player" className="flex w-[62px] items-center justify-center pr-2">
        <svg className="ml-1" width="28" height="26" viewBox="0 0 28 26" aria-hidden="true">
          <path d="M3 1H27V25H3Z" fill="#3c85b5" />
          <path d="M2 1H24V24H2Z" fill="#8cc8e8" />
          <path d="M1 1H20V25H1Z" fill="#5fa5d0" />
          <circle cx="11" cy="13" r="9.500" fill="#f47c20" stroke="#fbd2ae" />
          <path d="M7.500 7.500L17 13L7.500 18.500Z" fill="#fff" />
        </svg>
      </button>
      <button aria-label="Paint" className="flex w-[58px] items-center justify-center rounded-[3px] border border-[#8b9196] bg-linear-to-br from-[#6d7275] to-[#23282c]">
        <svg width="34" height="32" viewBox="0 0 34 32" aria-hidden="true">
          <path d="M3 17Q5 6 17 5Q29 5 29 16Q28 25 19 28Q11 29 9 23Q2 23 3 17Z" fill="#b9def2" stroke="#6ca8ca" />
          <circle cx="15" cy="19" r="2.500" fill="#30383e" />
          <circle cx="7.500" cy="17" r="2.700" fill="#e04535" />
          <circle cx="12" cy="11" r="2.700" fill="#3bb54a" />
          <circle cx="19" cy="9" r="2.700" fill="#f5b93c" />
          <path d="M26 8L16 31L21 26L29 10Z" fill="#e08a35" />
          <path d="M25 8Q23 2 27 1Q32 0 33 4Q32 9 29 10Z" fill="#c99e74" />
        </svg>
      </button>
      <div className="ml-auto flex items-center text-[11px]">
        <button className="mr-4">ES</button>
        <button aria-label="Show hidden icons" className="mr-[13px]">
          <svg width="8" height="4" aria-hidden="true"><path d="M0 4H8L4 0Z" fill="#fff" /></svg>
        </button>
        <button aria-label="Action Center" className="mr-2">
          <svg width="16" height="15" aria-hidden="true">
            <path d="M1.500 0V15" stroke="#fff" />
            <path d="M3 1H9L10 4H15L13 6.500L14 9L9 8L8 7H3Z" fill="#fff" />
          </svg>
        </button>
        <button aria-label="Network" className="mr-[17px]">
          <svg width="16" height="12" aria-hidden="true">
            <path d="M1 10h2v2h-2zM4 8h2v4h-2zM7 6h2v6h-2zM10 3h2v9h-2zM13 0h2v12h-2z" fill="#fff" />
          </svg>
        </button>
        <button className="mr-3 text-center leading-[17px]">
          08:19 p.m.
          <br />
          21/03/2017
        </button>
        <button aria-label="Show desktop" className="h-full w-[14px] border border-[#7b858d] bg-linear-to-br from-[#5e676e] to-[#12171b] to-60%" />
      </div>
    </footer>
  );
}

function Gradients() {
  return (
    <svg className="absolute h-0 w-0" aria-hidden="true">
      <defs>
        <filter id="glassBlur" x="-5%" y="-50%" width="110%" height="200%">
          <feGaussianBlur stdDeviation="4" />
        </filter>
        <linearGradient id="folderFill" x1="0" y1="0" x2="0" y2="1">
          <stop offset="0" stopColor="#fdeaa0" />
          <stop offset="1" stopColor="#edc450" />
        </linearGradient>
        <linearGradient id="paperFill" x1="0" y1="0" x2="1" y2="1">
          <stop offset="0.300" stopColor="#fff" />
          <stop offset="1" stopColor="#bfdcf6" />
        </linearGradient>
        <linearGradient id="orangeTab" x1="0" y1="0" x2="0" y2="1">
          <stop offset="0" stopColor="#ffb44d" />
          <stop offset="1" stopColor="#ffcf95" />
        </linearGradient>
        <linearGradient id="blueTab" x1="0" y1="0" x2="0" y2="1">
          <stop offset="0" stopColor="#8fbcf5" />
          <stop offset="1" stopColor="#bcd8fb" />
        </linearGradient>
        <linearGradient id="activeTab" x1="0" y1="0" x2="0" y2="1">
          <stop offset="0" stopColor="#dfe8fb" />
          <stop offset="1" stopColor="#8ba7e1" />
        </linearGradient>
        <radialGradient id="orb" cx="0.500" cy="0.900" r="0.900">
          <stop offset="0" stopColor="#3fc4ee" />
          <stop offset="0.500" stopColor="#1f5f96" />
          <stop offset="1" stopColor="#6b8ba0" />
        </radialGradient>
      </defs>
    </svg>
  );
}

export default function App() {
  return (
    <div className="relative flex h-screen w-full flex-col overflow-hidden bg-[#f0f0f0] font-['Open_Sans','Noto_Sans',sans-serif] text-[12px] leading-4 text-black">
      <Gradients />
      <TitleBar />
      <MenuBar />
      <div className="flex min-h-0 flex-1">
        <DrawingPanel />
        <Workspace />
        <div className="flex w-[22px] shrink-0 items-start justify-end bg-[#fafafa] pt-[2px]">
          <button className="flex h-[66px] w-5 items-center justify-center rounded-l-[3px] border border-r-0 border-[#999] bg-[#fbfbfb] font-['Liberation_Sans',sans-serif] [writing-mode:vertical-rl]">
            Toolpaths
          </button>
        </div>
      </div>
      <StatusBar />
      <Taskbar />
      {/* Caps lock indicator */}
      <div className="absolute right-6 bottom-[86px] flex h-[69px] w-[74px] items-center justify-center rounded-md bg-black">
        <svg width="42" height="40" viewBox="0 0 42 40" role="img" aria-label="Caps lock on">
          <path d="M21 3L38 25H34V31H37.500V37.500H4.500V31H8V25H4Z" fill="none" stroke="#fff" strokeWidth="3" />
          <text x="21" y="32" textAnchor="middle" fontSize="22" fontWeight="700" fontFamily="Liberation Sans, sans-serif" fill="#fff">A</text>
        </svg>
      </div>
    </div>
  );
}
